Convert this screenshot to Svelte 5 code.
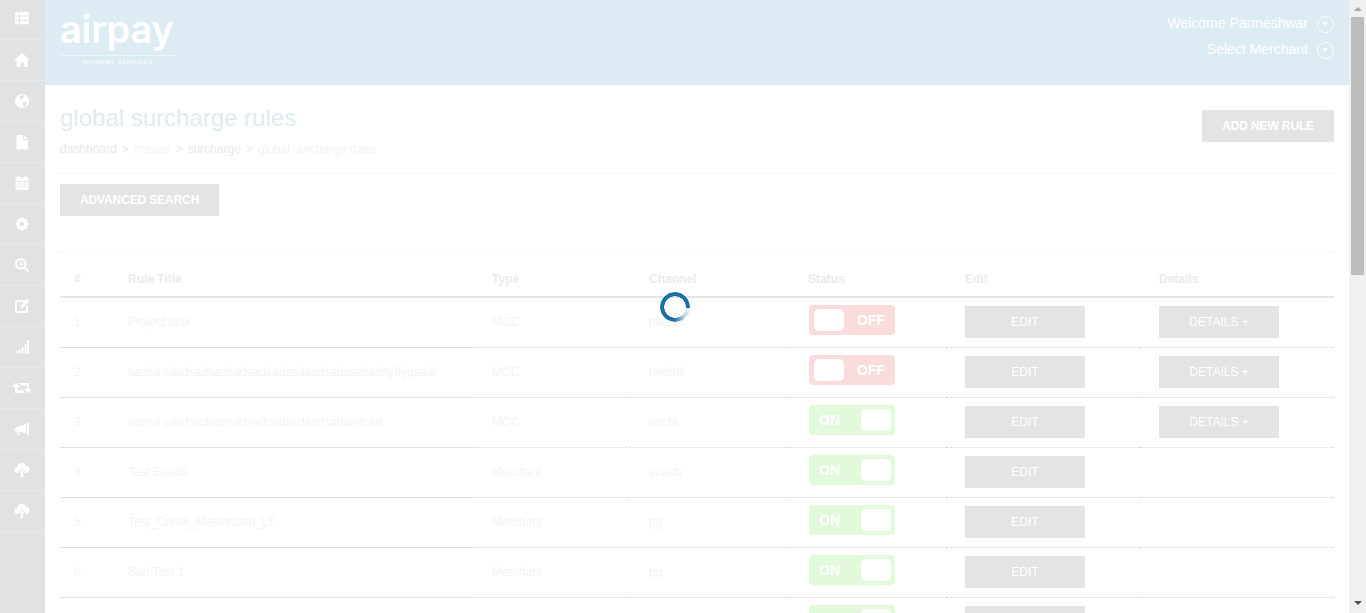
<script>
	const rows = [
		{ id: 1, title: 'Project task', type: 'MCC', channel: 'netbnk', on: false, details: true },
		{ id: 2, title: 'sadsd sdsdsadsadsadsadsadasdasdsadasdsadhyffygsdai', type: 'MCC', channel: 'netbnk', on: false, details: true },
		{ id: 3, title: 'sadsd sdsdsadsadsadsadsadasdasdsadasdsad', type: 'MCC', channel: 'onclik', on: true, details: true },
		{ id: 4, title: 'Test Enach', type: 'Merchant', channel: 'enach', on: true },
		{ id: 5, title: 'Test_Credit_Mastercard_LT', type: 'Merchant', channel: 'pg', on: true },
		{ id: 6, title: 'Sub Test 1', type: 'Merchant', channel: 'pg', on: true },
		{ id: 7, title: '', type: '', channel: '', on: true }
	];
</script>

<div class="page">
	<div class="shell">
		<nav class="sidebar">
			<a href="#top"><svg viewBox="0 0 16 16"><path d="M1 2h4v3.400H1zM6 2h9v3.400H6zM1 6.400h4v3.400H1zM6 6.400h9v3.400H6zM1 10.800h4v3.400H1zM6 10.800h9v3.400H6z" /></svg></a>
			<a href="#top"><svg viewBox="0 0 16 16"><path d="M8 .8 16 8.400h-2.400V15H9.800v-4.400H6.600V15H2.600V8.400H0z" /></svg></a>
			<a href="#top"><svg viewBox="0 0 16 16"><circle cx="8" cy="8" r="7" /><path class="cut" d="M7 2.200 9.800 2l.8 1.600-1.600 1-1 1.800-2.200-.8L5 4.200zM9 9.400l3-.4 1 1.600-2 3-1.600.6-.4-2.400z" /></svg></a>
			<a href="#top"><svg viewBox="0 0 16 16"><path d="M2.500 1H9v5h5v9.400H2.500zM10 1l4 4h-4z" /></svg></a>
			<a href="#top"><svg viewBox="0 0 16 16"><path d="M1.500 2.500h2V1h2v1.500h5V1h2v1.500h2V6h-13zM1.500 7h13v8h-13zM3 8.500v1h2v-1zM6 8.500v1h2v-1zM9 8.500v1h2v-1zM12 8.500v1h1.200v-1zM3 11v1h2v-1zM6 11v1h2v-1zM9 11v1h2v-1zM12 11v1h1.200v-1z" fill-rule="evenodd" /></svg></a>
			<a href="#top"><svg viewBox="0 0 16 16"><path class="teeth" d="M8 1.600v12.800M1.600 8h12.800M3.500 3.500l9 9M12.500 3.500l-9 9" /><circle cx="8" cy="8" r="5" /><circle class="cut" cx="8" cy="8" r="2.200" /></svg></a>
			<a href="#top"><svg viewBox="0 0 16 16"><path class="ring" d="M6.800 2a4.800 4.800 0 1 0 0 9.600 4.800 4.800 0 0 0 0-9.600zM10.400 10.400 14.600 14.600" /><path d="M6 4.600h1.600V7h1.600v1.400H6z" /></svg></a>
			<a href="#top"><svg viewBox="0 0 16 16"><path class="ring" d="M11.500 3H3.600Q2 3 2 4.600v7.800Q2 14 3.600 14h7.800Q13 14 13 12.400V8" /><path d="M13 .8 15.400 3 9.400 9.600 6.400 10.400l.8-3.200z" /></svg></a>
			<a href="#top"><svg viewBox="0 0 16 16"><path d="M1.500 12h2v2.500h-2zM4.500 10.500h2v4h-2zM7.500 8h2v6.500h-2zM10.500 5h2v9.500h-2zM13 1h2v13.500h-2z" /></svg></a>
			<a href="#top"><svg class="wide" viewBox="0 0 20 16"><path d="M4 2.500 8 7H5.500v3.500H11l2 2.500H3V7H0zM7 3h10v6h2.500L16 13.500 12.500 9H15V5.500H9z" /></svg></a>
			<a href="#top"><svg viewBox="0 0 16 16"><path d="M13 2h2v12h-2zM12 3v10L5.500 10.500H5l.8 3.500H4L2.800 10.300H1.500L0 8.800 1.500 8V6L5.500 5.500z" /></svg></a>
			<a href="#top"><svg viewBox="0 0 16 16"><path d="M7.800 1a4.400 4.400 0 0 1 4.200 3A3.500 3.500 0 0 1 15.500 7.500 3.500 3.500 0 0 1 12.500 11h-10A3 3 0 0 1 .5 8 3 3 0 0 1 3.200 5 4.600 4.600 0 0 1 7.800 1z" /><path class="cut" d="M8 6 12 10.500H10V12H6V10.500H4z" /><path d="M8 7 10.800 10.200H9.200v5H6.800v-5H5.200z" /></svg></a>
			<a href="#top"><svg viewBox="0 0 16 16"><path d="M7.800 1a4.400 4.400 0 0 1 4.200 3A3.500 3.500 0 0 1 15.500 7.500 3.500 3.500 0 0 1 12.500 11h-10A3 3 0 0 1 .5 8 3 3 0 0 1 3.200 5 4.600 4.600 0 0 1 7.800 1z" /><path class="cut" d="M8 6 12 10.500H10V12H6V10.500H4z" /><path d="M8 7 10.800 10.200H9.200v5H6.800v-5H5.200z" /></svg></a>
		</nav>

		<div class="main">
			<header class="topbar">
				<div class="logo">
					<span class="wordmark">airpay</span>
					<span class="tagline">PAYMENT SERVICES</span>
				</div>
				<div class="user">
					<div class="user-line">
						<span>Welcome Parmeshwar</span>
						<i class="caret"></i>
					</div>
					<div class="user-line">
						<span>Select Merchant</span>
						<i class="caret"></i>
					</div>
				</div>
			</header>

			<section class="content">
				<div class="page-head">
					<div>
						<h1>global surcharge rules</h1>
						<p class="crumbs">
							<span class="dark">dashboard</span><b>&gt;</b><span>master</span><b>&gt;</b><span class="dark">surcharge</span><b>&gt;</b><span>global surcharge rules</span>
						</p>
					</div>
					<button class="btn add">ADD NEW RULE</button>
				</div>

				<div class="search-bar">
					<button class="btn">ADVANCED SEARCH</button>
				</div>

				<table>
					<thead>
						<tr>
							<th class="solid">#</th>
							<th class="solid">Rule Title</th>
							<th>Type</th>
							<th>Channel</th>
							<th>Status</th>
							<th>Edit</th>
							<th>Details</th>
						</tr>
					</thead>
					<tbody>
						{#each rows as row (row.id)}
							<tr>
								<td class="solid">{row.id}</td>
								<td class="solid">{row.title}</td>
								<td>{row.type}</td>
								<td>{row.channel}</td>
								<td>
									<div class="toggle" class:on={row.on}>
										<span class="label">{row.on ? 'ON' : 'OFF'}</span>
										<span class="knob"></span>
									</div>
								</td>
								<td><button class="btn wide">EDIT</button></td>
								<td>
									{#if row.details}
										<button class="btn wide">DETAILS +</button>
									{/if}
								</td>
							</tr>
						{/each}
					</tbody>
				</table>
			</section>
		</div>
	</div>

	<div class="scrollbar">
		<span class="arrow up"></span>
		<span class="thumb"></span>
		<span class="arrow down"></span>
	</div>

	<div class="spinner"></div>
</div>

<style>
	:global(body) {
		margin: 0;
		overflow: hidden;
	}

	.page {
		display: flex;
		height: 100vh;
		overflow: hidden;
		font-family: 'Liberation Sans', Arial, sans-serif;
		font-size: 12px;
		color: #f3f3f3;
		background: #fff;
	}

	.shell {
		display: flex;
		flex: 1;
		min-width: 0;
		min-height: 1375px;
		opacity: 0.99;
	}

	.scrollbar {
		display: flex;
		flex-direction: column;
		flex: 0 0 17px;
		background: #f0f0f0;
	}

	.arrow {
		flex: 0 0 17px;
		display: flex;
		justify-content: center;
		box-sizing: border-box;
	}

	.arrow::before {
		content: '';
		height: 0;
		border-left: 4px solid transparent;
		border-right: 4px solid transparent;
	}

	.arrow.up {
		padding-top: 7px;
	}

	.arrow.up::before {
		border-bottom: 4px solid #a8a8a8;
	}

	.arrow.down {
		padding-top: 5px;
		margin-top: auto;
	}

	.arrow.down::before {
		border-top: 4px solid #505050;
	}

	.thumb {
		height: 258px;
		margin: 0 2px;
		background: #bdbdbd;
	}

	.sidebar {
		flex: 0 0 45px;
		background: #e1e2e4;
	}

	.sidebar a {
		display: flex;
		align-items: center;
		justify-content: center;
		padding-right: 1px;
		box-sizing: border-box;
		height: 41px;
		border-bottom: 1px solid #e7e8e9;
	}

	.sidebar a:first-child {
		height: 40px;
		padding-bottom: 3px;
	}

	.sidebar svg {
		width: 16px;
		height: 16px;
		fill: #fff;
	}

	.sidebar svg.wide {
		width: 20px;
	}

	.cut {
		fill: #e1e2e4;
	}

	.teeth {
		fill: none;
		stroke: #fff;
		stroke-width: 3;
	}

	.ring {
		fill: none;
		stroke: #fff;
		stroke-width: 2;
	}

	.main {
		flex: 1;
		min-width: 0;
	}

	.topbar {
		display: flex;
		justify-content: space-between;
		height: 85px;
		padding: 0 15px;
		background: #ddebf3;
	}

	.logo {
		display: flex;
		flex-direction: column;
		align-items: center;
		width: 115px;
		margin-top: 9px;
		color: #fff;
	}

	.wordmark {
		width: 100%;
		padding-bottom: 5px;
		border-bottom: 1px solid #eef5f9;
		font-family: Inter, sans-serif;
		font-size: 38px;
		font-weight: 600;
		line-height: 41px;
		letter-spacing: -0.2px;
		white-space: nowrap;
	}

	.tagline {
		margin-top: 3px;
		font-size: 6px;
		letter-spacing: 0.7px;
		color: #fff;
	}

	.user {
		padding-top: 11px;
		font-size: 14px;
		color: #fff;
	}

	.user-line {
		display: flex;
		align-items: center;
		justify-content: flex-end;
		gap: 9px;
		height: 26px;
	}

	.user-line span {
		margin-top: -2px;
	}

	.caret {
		position: relative;
		box-sizing: border-box;
		width: 17px;
		height: 17px;
		border: 1.500px solid #fff;
		border-radius: 50%;
	}

	.caret::after {
		content: '';
		position: absolute;
		top: 5px;
		left: 3.500px;
		border: 3.500px solid transparent;
		border-top: 4px solid #fff;
		border-bottom: 0;
	}

	.content {
		padding: 0 15px;
	}

	.page-head {
		display: flex;
		justify-content: space-between;
		align-items: flex-start;
		height: 89px;
		padding-top: 19px;
		box-sizing: border-box;
		border-bottom: 1px dotted #eeeeee;
	}

	h1 {
		margin: 0;
		font-size: 24px;
		font-weight: 400;
		line-height: 28px;
		color: #dfecf4;
	}

	.crumbs {
		display: flex;
		margin: 10px 0 0;
		line-height: 14px;
		color: #f3f3f3;
	}

	.crumbs .dark {
		color: #e9e9e9;
	}

	.crumbs b {
		margin: 0 5px;
		font-weight: 400;
		color: #dfecf4;
	}

	.btn {
		height: 32px;
		padding: 0 20px;
		border: 0;
		background: #e4e4e4;
		color: #fff;
		font-family: inherit;
		font-size: 12px;
		font-weight: 700;
		letter-spacing: -0.13px;
	}

	.btn.add {
		margin-top: 6px;
	}

	.btn.wide {
		display: block;
		width: 120px;
		padding: 0;
		font-weight: 400;
		letter-spacing: 0;
	}

	.search-bar {
		height: 79px;
		padding-top: 10px;
		box-sizing: border-box;
		border-bottom: 1px dotted #eeeeee;
	}

	table {
		width: 100%;
		table-layout: fixed;
		border-collapse: separate;
		border-spacing: 0;
	}

	th {
		height: 45px;
		padding: 0 0 10px 19px;
		box-sizing: border-box;
		border-bottom: 2px solid #e5e5e5;
		font-weight: 700;
		text-align: left;
		color: #ebebeb;
		vertical-align: bottom;
	}

	th:nth-child(1) { width: 54px; }
	th:nth-child(2) { width: 359px; }
	th:nth-child(3) { width: 157px; }
	th:nth-child(4) { width: 159px; }
	th:nth-child(5) { width: 157px; }
	th:nth-child(6) { width: 194px; }
	th:nth-child(7) { width: 194px; }

	th.solid,
	td.solid {
		padding-left: 14px;
	}

	td {
		height: 50px;
		padding: 0 0 2px 19px;
		box-sizing: border-box;
		border-bottom: 1px dotted #d4d4d4;
		white-space: nowrap;
		overflow: hidden;
	}

	td.solid {
		border-bottom: 1px solid #dfdfdf;
	}

	.toggle {
		display: flex;
		align-items: center;
		justify-content: space-between;
		flex-direction: row-reverse;
		box-sizing: border-box;
		width: 86px;
		height: 30px;
		margin: -3px 0 0 1px;
		padding: 0 10px 0 5px;
		border-radius: 4px;
		background: #fbdcdc;
	}

	.toggle.on {
		flex-direction: row;
		padding: 0 4px 0 10px;
		background: #e2f9dc;
	}

	.label {
		font-size: 14px;
		font-weight: 700;
		color: #fff;
	}

	.knob {
		width: 30px;
		height: 22px;
		border-radius: 5px;
		background: #fff;
	}

	.spinner {
		position: fixed;
		left: 660px;
		top: 292px;
		width: 30px;
		height: 30px;
		border-radius: 50%;
		background: conic-gradient(from 95deg, #e4eff6 0deg, #bcd6e8 40deg, #1a6fa8 90deg, #1a6fa8 360deg);
		-webkit-mask: radial-gradient(circle, transparent 10.500px, #000 11px);
		mask: radial-gradient(circle, transparent 10.500px, #000 11px);
	}
</style>
